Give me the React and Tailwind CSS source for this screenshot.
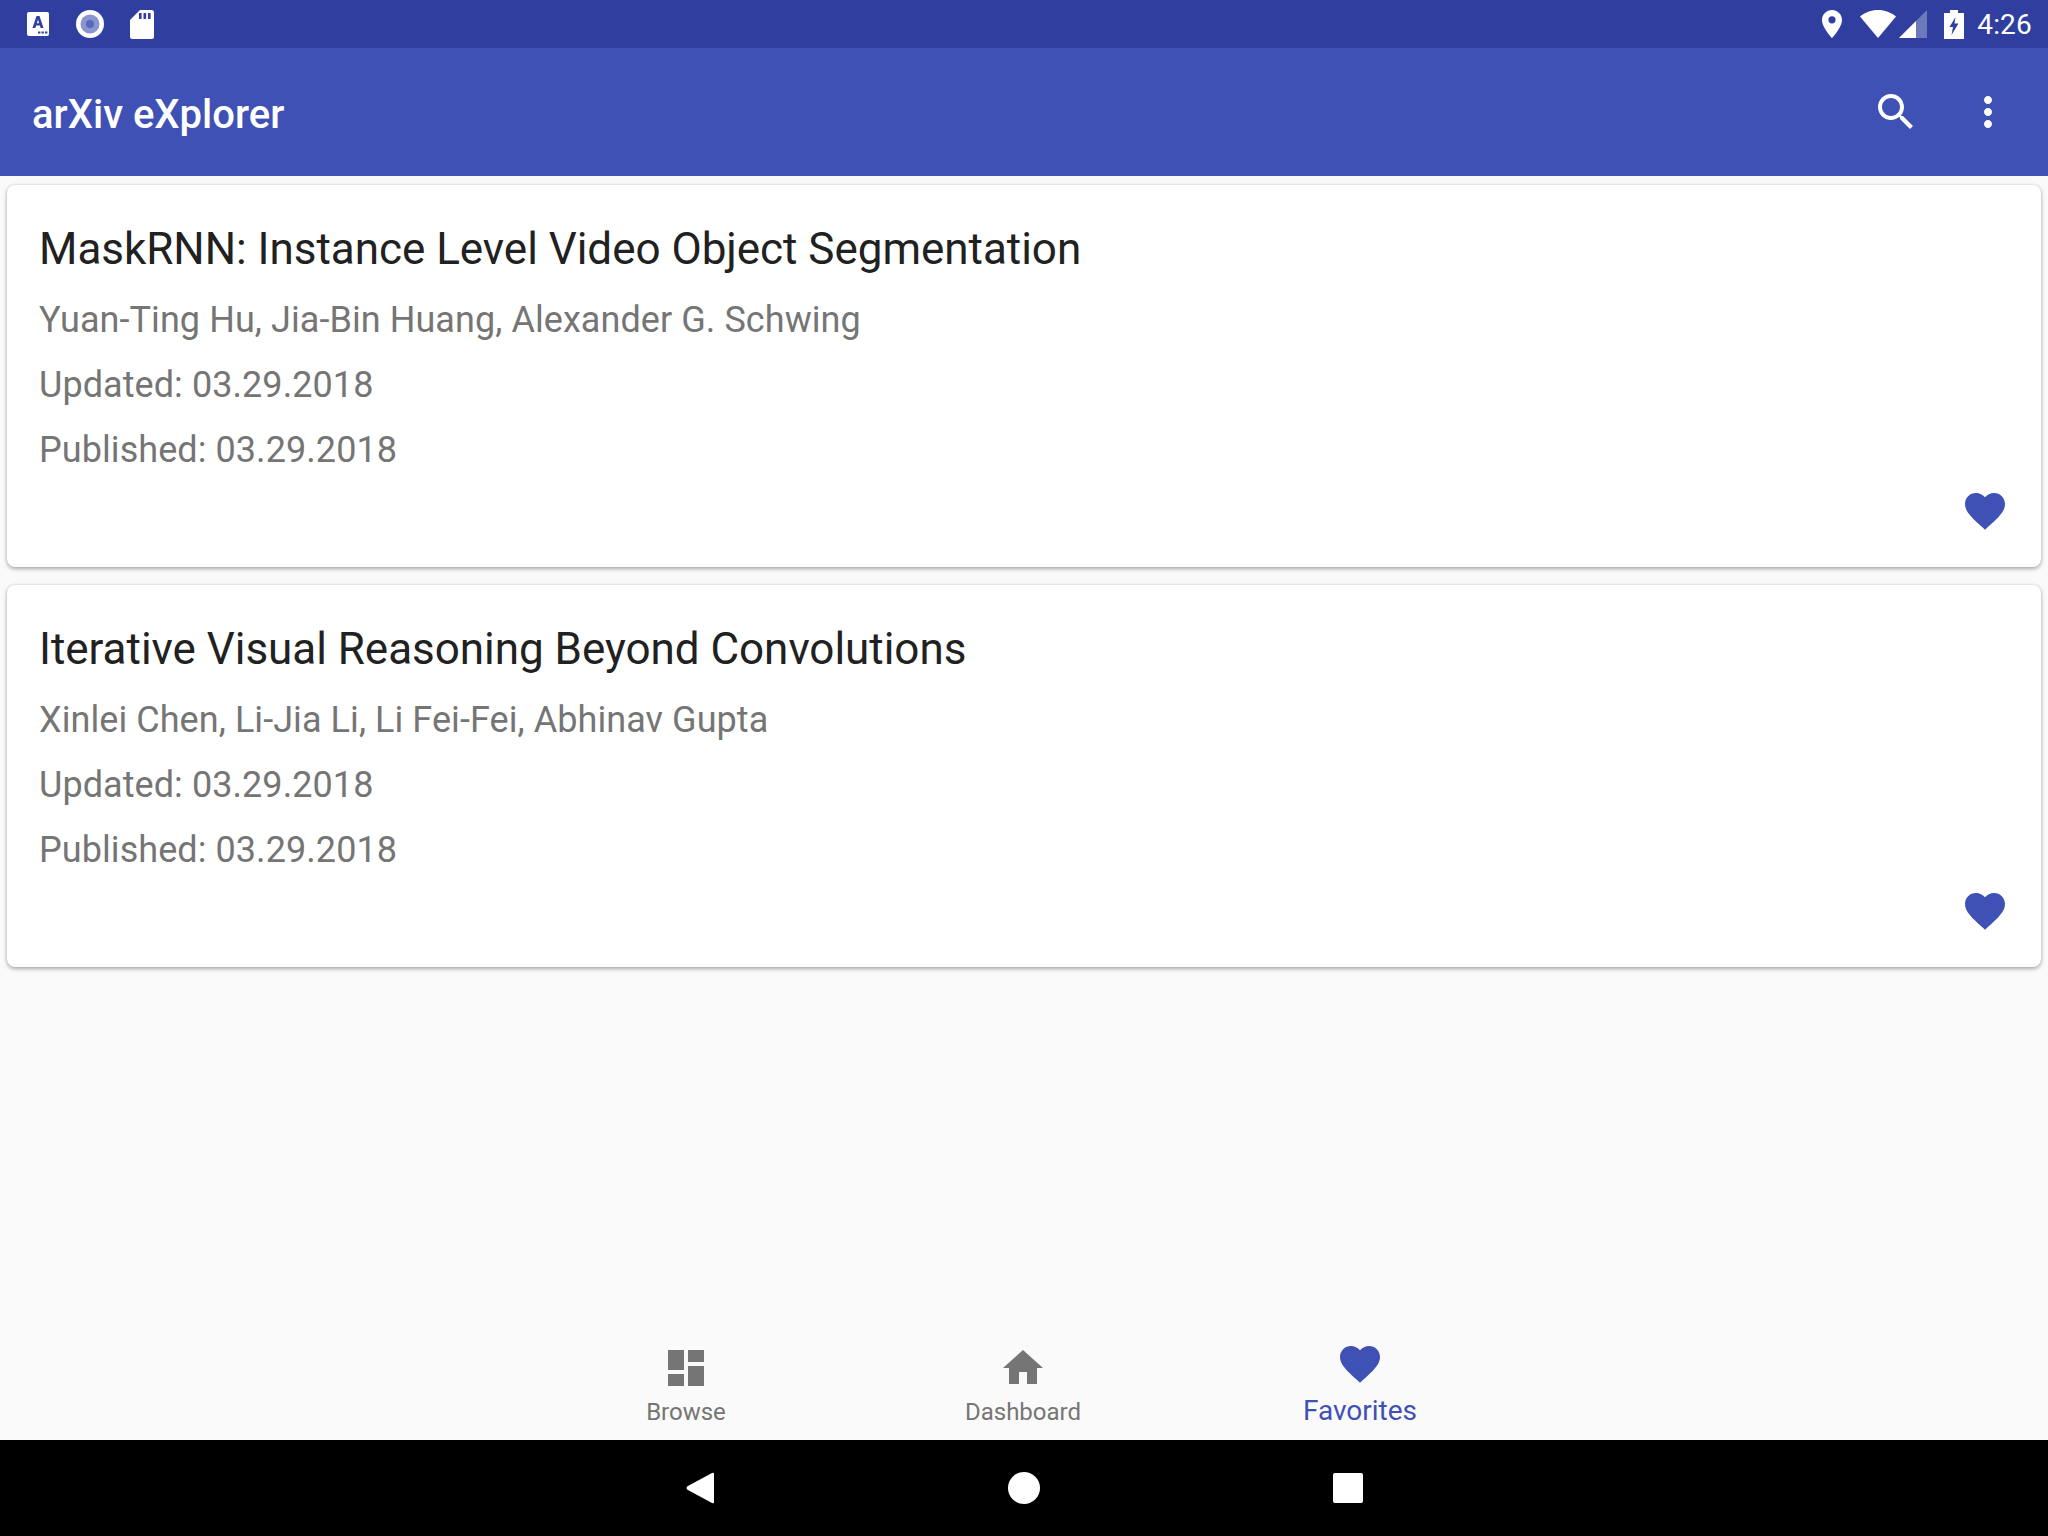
const HEART = 'M12 21.35l-1.45-1.32C5.4 15.36 2 12.28 2 8.5 2 5.42 4.42 3 7.5 3c1.74 0 3.41.81 4.5 2.09C13.09 3.81 14.76 3 16.5 3 19.58 3 22 5.42 22 8.5c0 3.78-3.4 6.86-8.55 11.54L12 21.35z';
const SEARCH = 'M15.5 14h-.79l-.28-.27C15.41 12.59 16 11.11 16 9.5 16 5.91 13.09 3 9.5 3S3 5.91 3 9.5 5.91 16 9.5 16c1.61 0 3.09-.59 4.23-1.57l.27.28v.79l5 4.99L20.49 19l-4.99-5zm-6 0C7.01 14 5 11.99 5 9.5S7.01 5 9.5 5 14 7.01 14 9.5 11.99 14 9.5 14z';
const MORE = 'M12 8c1.1 0 2-.9 2-2s-.9-2-2-2-2 .9-2 2 .9 2 2 2zm0 2c-1.1 0-2 .9-2 2s.9 2 2 2 2-.9 2-2-.9-2-2-2zm0 6c-1.1 0-2 .9-2 2s.9 2 2 2 2-.9 2-2-.9-2-2-2z';
const DASHBOARD = 'M3 13h8V3H3v10zm0 8h8v-6H3v6zm10 0h8V11h-8v10zm0-18v6h8V3h-8z';
const HOME = 'M10 20v-6h4v6h5v-8h3L12 3 2 12h3v8z';

function Icon({ d, className }) {
  return (
    <svg viewBox="0 0 24 24" className={className} fill="currentColor">
      <path d={d} />
    </svg>
  );
}

function StatusLeft() {
  return (
    <div className="flex items-center">
      <svg viewBox="0 0 22 24" className="ml-[27px] w-[22px] h-[24px]">
        <rect x="0" y="0" width="22" height="24" rx="2" fill="#fff" />
        <path d="M5.5 16 L9.5 4 H12.5 L16.5 16 H13.6 L12.9 13.6 H9.1 L8.4 16 Z" fill="#303f9f" />
        <path d="M11 7.5 L9.9 11.2 H12.1 Z" fill="#fff" />
        <rect x="11" y="19.5" width="2.4" height="2" fill="#303f9f" />
        <rect x="14.5" y="19.5" width="2.4" height="2" fill="#303f9f" />
        <rect x="18" y="19.5" width="2.4" height="2" fill="#303f9f" />
      </svg>
      <svg viewBox="0 0 28 28" className="ml-[27px] w-[28px] h-[28px]">
        <circle cx="14" cy="14" r="14" fill="#fff" />
        <circle cx="14" cy="14" r="9.5" fill="#8a94cf" />
        <circle cx="14" cy="14" r="4" fill="#5a68bb" />
      </svg>
      <svg viewBox="0 0 24 29" className="ml-[26px] w-[24px] h-[29px]">
        <path d="M10 0 H21.5 A2.5 2.5 0 0 1 24 2.5 V26.5 A2.5 2.5 0 0 1 21.5 29 H2.5 A2.5 2.5 0 0 1 0 26.5 V10 Z" fill="#fff" />
        <rect x="9" y="3" width="2.6" height="6" fill="#303f9f" />
        <rect x="13.5" y="3" width="2.6" height="6" fill="#303f9f" />
        <rect x="18" y="3" width="2.6" height="6" fill="#303f9f" />
      </svg>
    </div>
  );
}

function StatusRight() {
  return (
    <div className="flex items-center">
      <svg viewBox="0 0 20 28" className="w-[20px] h-[28px]">
        <path d="M10 0 C4.5 0 0 4.4 0 9.9 C0 17.3 10 28 10 28 S20 17.3 20 9.9 C20 4.4 15.5 0 10 0 Z M10 13.4 A3.6 3.6 0 1 1 10 6.2 A3.6 3.6 0 0 1 10 13.4 Z" fill="#fff" />
      </svg>
      <svg viewBox="0 0 36 28" className="ml-[18px] w-[36px] h-[28px]">
        <path d="M18 28 L0 6.5 C5 2.5 11 0 18 0 S31 2.5 36 6.5 Z" fill="#fff" />
      </svg>
      <svg viewBox="0 0 28 28" className="ml-[3px] w-[28px] h-[28px]">
        <path d="M28 0 L28 28 L0 28 Z" fill="#fff" fillOpacity="0.3" />
        <path d="M17 11 L17 28 L0 28 Z" fill="#fff" />
      </svg>
      <svg viewBox="0 0 20 29" className="ml-[17px] w-[20px] h-[29px]">
        <path d="M6 0 H14 V3 H20 V29 H0 V3 H6 Z" fill="#fff" />
        <path d="M11.5 7 L5.5 17 H9 L7.5 25 L14.5 13.5 H10.5 Z" fill="#303f9f" />
      </svg>
      <span className="ml-[13px] mr-[16px] pt-[2px] text-[28px] leading-none tracking-[0.2px] text-white">4:26</span>
    </div>
  );
}

function Card({ title, authors }) {
  return (
    <div className="bg-white rounded-lg shadow-[0_2px_4px_rgba(0,0,0,0.3),0_0_3px_rgba(0,0,0,0.12)] h-[382px] pl-[32px] pr-[32px] pt-[39px] flex flex-col">
      <div className="text-[44px] leading-[50px] tracking-[-0.03px] text-[#212121]">{title}</div>
      <div className="mt-[14px] text-[36px] leading-[65px] tracking-[0.07px] text-[#757575]">{authors}</div>
      <div className="text-[36px] leading-[65px] tracking-[0.07px] text-[#757575]">Updated: 03.29.2018</div>
      <div className="text-[36px] leading-[65px] tracking-[0.07px] text-[#757575]">Published: 03.29.2018</div>
      <div className="flex justify-end mt-auto mb-[32px]">
        <Icon d={HEART} className="w-[48px] h-[48px] text-[#3f51b5]" />
      </div>
    </div>
  );
}

function NavItem({ d, label, active }) {
  return (
    <div className="w-[337px] flex flex-col items-center">
      <Icon
        d={d}
        className={active ? 'w-[48px] h-[48px] -mt-[4px] text-[#3f51b5]' : 'w-[48px] h-[48px] text-[#757575]'}
      />
      <span className={active ? 'mt-[5px] text-[28px] leading-[36px] text-[#3f51b5]' : 'mt-[2px] text-[24px] leading-[36px] text-[#757575]'}>
        {label}
      </span>
    </div>
  );
}

export default function App() {
  return (
    <div className="w-[2048px] h-[1536px] flex flex-col bg-[#fafafa] overflow-hidden font-['Roboto',sans-serif]">
      {/* Status bar */}
      <div className="h-[48px] bg-[#303f9f] flex items-center justify-between">
        <StatusLeft />
        <StatusRight />
      </div>

      {/* App bar */}
      <div className="h-[128px] bg-[#3f51b5] flex items-center justify-between">
        <span className="ml-[32px] pt-[6px] text-[40px] font-medium text-white">arXiv eXplorer</span>
        <div className="flex items-center text-white mr-[36px]">
          <Icon d={SEARCH} className="w-[48px] h-[48px]" />
          <Icon d={MORE} className="ml-[44px] w-[48px] h-[48px]" />
        </div>
      </div>

      {/* Paper list */}
      <div className="flex-1 px-[7px] pt-[9px] flex flex-col gap-[18px]">
        <Card title="MaskRNN: Instance Level Video Object Segmentation" authors="Yuan-Ting Hu, Jia-Bin Huang, Alexander G. Schwing" />
        <Card title="Iterative Visual Reasoning Beyond Convolutions" authors="Xinlei Chen, Li-Jia Li, Li Fei-Fei, Abhinav Gupta" />
      </div>

      {/* Bottom tabs */}
      <div className="h-[96px] flex justify-center pr-[2px] shrink-0 items-start">
        <NavItem d={DASHBOARD} label="Browse" />
        <NavItem d={HOME} label="Dashboard" />
        <NavItem d={HEART} label="Favorites" active />
      </div>

      {/* Android nav bar */}
      <div className="h-[96px] bg-black flex items-center justify-center shrink-0 text-white">
        <svg viewBox="0 0 28 32" className="w-[28px] h-[32px]">
          <path d="M26 1 Q28 0 28 2 V30 Q28 32 26 31 L1 17.5 Q0 16 1 14.5 Z" fill="#fff" />
        </svg>
        <div className="ml-[294px] w-[32px] h-[32px] rounded-full bg-white" />
        <div className="ml-[293px] w-[30px] h-[30px] rounded-[2px] bg-white" />
      </div>
    </div>
  );
}
